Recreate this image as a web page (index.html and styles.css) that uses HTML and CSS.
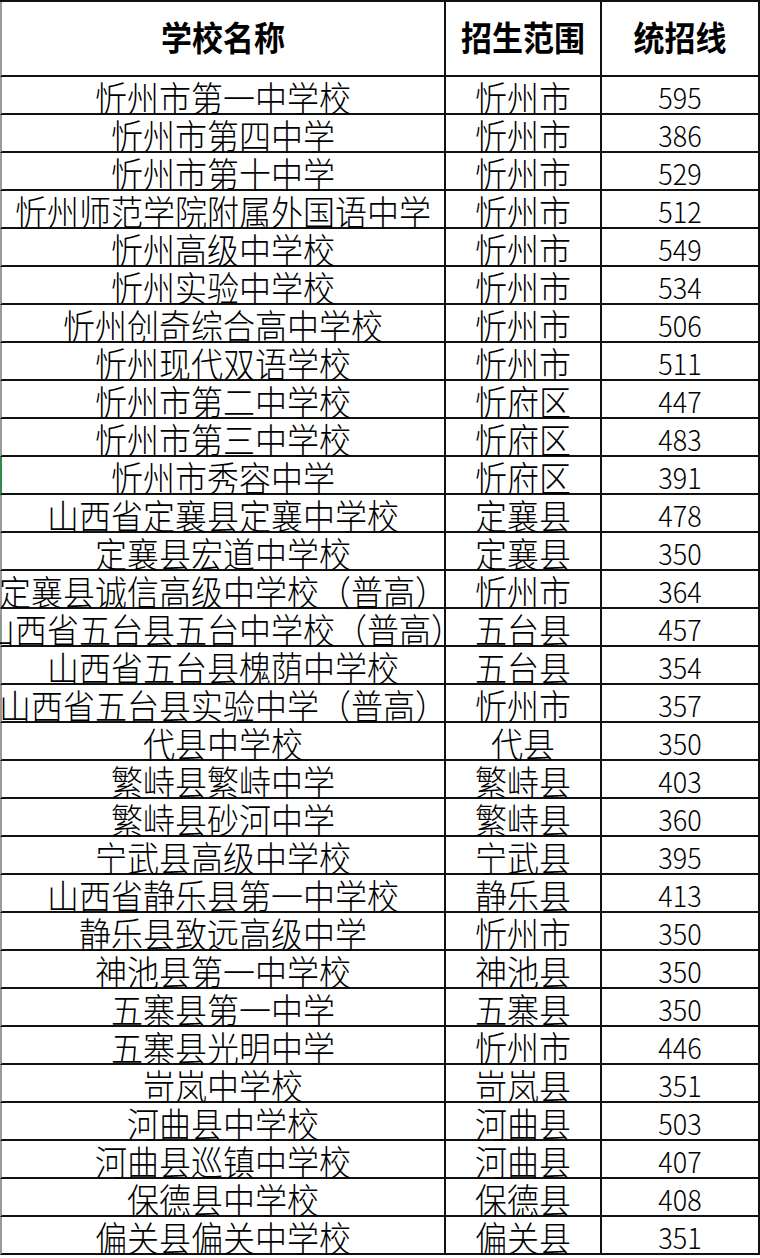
FILE: index.html
```html
<!DOCTYPE html>
<html lang="zh-CN">
<head>
<meta charset="utf-8">
<title>忻州市高中统招线</title>
<link rel="stylesheet" href="styles.css">
</head>
<body>
<div class="sheet">
  <div class="row head">
    <div class="c name"><span class="t">学校名称</span></div>
    <div class="c area"><span class="t">招生范围</span></div>
    <div class="c score"><span class="t">统招线</span></div>
  </div>
  <div class="row"><div class="c name"><span class="t">忻州市第一中学校</span></div><div class="c area"><span class="t">忻州市</span></div><div class="c score"><span class="n">595</span></div></div>
  <div class="row"><div class="c name"><span class="t">忻州市第四中学</span></div><div class="c area"><span class="t">忻州市</span></div><div class="c score"><span class="n">386</span></div></div>
  <div class="row"><div class="c name"><span class="t">忻州市第十中学</span></div><div class="c area"><span class="t">忻州市</span></div><div class="c score"><span class="n">529</span></div></div>
  <div class="row"><div class="c name"><span class="t">忻州师范学院附属外国语中学</span></div><div class="c area"><span class="t">忻州市</span></div><div class="c score"><span class="n">512</span></div></div>
  <div class="row"><div class="c name"><span class="t">忻州高级中学校</span></div><div class="c area"><span class="t">忻州市</span></div><div class="c score"><span class="n">549</span></div></div>
  <div class="row"><div class="c name"><span class="t">忻州实验中学校</span></div><div class="c area"><span class="t">忻州市</span></div><div class="c score"><span class="n">534</span></div></div>
  <div class="row"><div class="c name"><span class="t">忻州创奇综合高中学校</span></div><div class="c area"><span class="t">忻州市</span></div><div class="c score"><span class="n">506</span></div></div>
  <div class="row"><div class="c name"><span class="t">忻州现代双语学校</span></div><div class="c area"><span class="t">忻州市</span></div><div class="c score"><span class="n">511</span></div></div>
  <div class="row"><div class="c name"><span class="t">忻州市第二中学校</span></div><div class="c area"><span class="t">忻府区</span></div><div class="c score"><span class="n">447</span></div></div>
  <div class="row"><div class="c name"><span class="t">忻州市第三中学校</span></div><div class="c area"><span class="t">忻府区</span></div><div class="c score"><span class="n">483</span></div></div>
  <div class="row mark"><div class="c name"><span class="t">忻州市秀容中学</span></div><div class="c area"><span class="t">忻府区</span></div><div class="c score"><span class="n">391</span></div></div>
  <div class="row"><div class="c name"><span class="t">山西省定襄县定襄中学校</span></div><div class="c area"><span class="t">定襄县</span></div><div class="c score"><span class="n">478</span></div></div>
  <div class="row"><div class="c name"><span class="t">定襄县宏道中学校</span></div><div class="c area"><span class="t">定襄县</span></div><div class="c score"><span class="n">350</span></div></div>
  <div class="row"><div class="c name"><span class="t">定襄县诚信高级中学校（普高）</span></div><div class="c area"><span class="t">忻州市</span></div><div class="c score"><span class="n">364</span></div></div>
  <div class="row"><div class="c name"><span class="t">山西省五台县五台中学校（普高）</span></div><div class="c area"><span class="t">五台县</span></div><div class="c score"><span class="n">457</span></div></div>
  <div class="row"><div class="c name"><span class="t">山西省五台县槐荫中学校</span></div><div class="c area"><span class="t">五台县</span></div><div class="c score"><span class="n">354</span></div></div>
  <div class="row"><div class="c name"><span class="t">山西省五台县实验中学（普高）</span></div><div class="c area"><span class="t">忻州市</span></div><div class="c score"><span class="n">357</span></div></div>
  <div class="row"><div class="c name"><span class="t">代县中学校</span></div><div class="c area"><span class="t">代县</span></div><div class="c score"><span class="n">350</span></div></div>
  <div class="row"><div class="c name"><span class="t">繁峙县繁峙中学</span></div><div class="c area"><span class="t">繁峙县</span></div><div class="c score"><span class="n">403</span></div></div>
  <div class="row"><div class="c name"><span class="t">繁峙县砂河中学</span></div><div class="c area"><span class="t">繁峙县</span></div><div class="c score"><span class="n">360</span></div></div>
  <div class="row"><div class="c name"><span class="t">宁武县高级中学校</span></div><div class="c area"><span class="t">宁武县</span></div><div class="c score"><span class="n">395</span></div></div>
  <div class="row"><div class="c name"><span class="t">山西省静乐县第一中学校</span></div><div class="c area"><span class="t">静乐县</span></div><div class="c score"><span class="n">413</span></div></div>
  <div class="row"><div class="c name"><span class="t">静乐县致远高级中学</span></div><div class="c area"><span class="t">忻州市</span></div><div class="c score"><span class="n">350</span></div></div>
  <div class="row"><div class="c name"><span class="t">神池县第一中学校</span></div><div class="c area"><span class="t">神池县</span></div><div class="c score"><span class="n">350</span></div></div>
  <div class="row"><div class="c name"><span class="t">五寨县第一中学</span></div><div class="c area"><span class="t">五寨县</span></div><div class="c score"><span class="n">350</span></div></div>
  <div class="row"><div class="c name"><span class="t">五寨县光明中学</span></div><div class="c area"><span class="t">忻州市</span></div><div class="c score"><span class="n">446</span></div></div>
  <div class="row"><div class="c name"><span class="t">岢岚中学校</span></div><div class="c area"><span class="t">岢岚县</span></div><div class="c score"><span class="n">351</span></div></div>
  <div class="row"><div class="c name"><span class="t">河曲县中学校</span></div><div class="c area"><span class="t">河曲县</span></div><div class="c score"><span class="n">503</span></div></div>
  <div class="row"><div class="c name"><span class="t">河曲县巡镇中学校</span></div><div class="c area"><span class="t">河曲县</span></div><div class="c score"><span class="n">407</span></div></div>
  <div class="row"><div class="c name"><span class="t">保德县中学校</span></div><div class="c area"><span class="t">保德县</span></div><div class="c score"><span class="n">408</span></div></div>
  <div class="row"><div class="c name"><span class="t">偏关县偏关中学校</span></div><div class="c area"><span class="t">偏关县</span></div><div class="c score"><span class="n">351</span></div></div>
</div>
</body>
</html>
```

FILE: styles.css
```css
html, body {
  margin: 0;
  padding: 0;
  background: #ffffff;
}

body {
  width: 760px;
  height: 1258px;
  overflow: hidden;
  color: #000;
  font-family: "Noto Sans CJK SC", "Noto Sans", sans-serif;
}

.sheet {
  width: 760px;
  border-top: 2px solid #111;
}

.row {
  box-sizing: border-box;
  width: 760px;
  height: 38px;
  display: grid;
  grid-template-columns: 444px 156px 158px;
  border-left: 2px solid #9a9a9a;
  border-bottom: 2px solid #111;
}

.row.mark {
  border-left-color: #2f8a4a;
}

.row.head {
  height: 75px;
}

.c {
  box-sizing: border-box;
  display: flex;
  justify-content: center;
  align-items: flex-start;
  white-space: nowrap;
  border-right: 2px solid #111;
  padding-top: 5px;
  line-height: 30px;
  font-size: 32px;
  font-weight: 300;
}

.c.score {
  padding-top: 5px;
}

.t {
  display: inline-block;
  transform: scaleY(1.1);
}

.n {
  display: inline-block;
  font-family: "Noto Sans CJK SC", "Noto Sans", sans-serif;
  font-weight: 300;
  font-size: 27px;
  transform: scaleY(1.05);
}

.head .c {
  padding-top: 0;
  padding-bottom: 3px;
  line-height: 70px;
  font-size: 31px;
  font-weight: 700;
}
```
